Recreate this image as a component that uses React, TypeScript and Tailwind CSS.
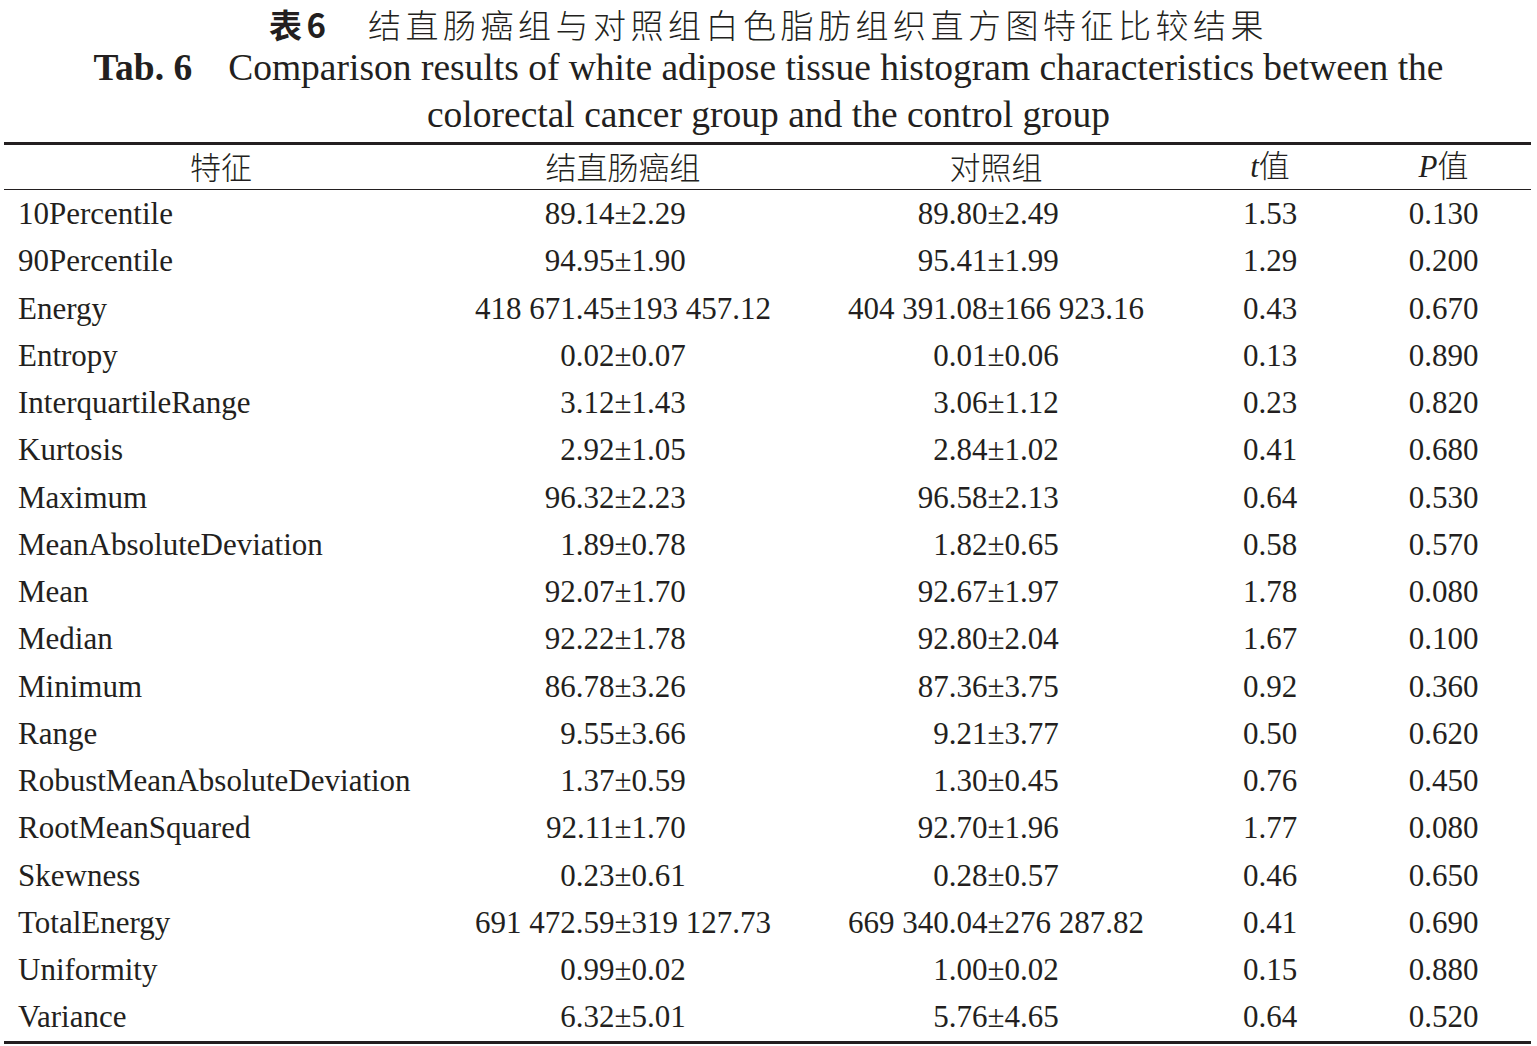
const serif = "font-['Liberation_Serif','Noto_Sans_CJK_SC',serif]";
const cjk = "font-['Noto_Sans_CJK_SC','Liberation_Sans',sans-serif]";

// [feature, cancer group, control group, t, P]
const rows: [string, string, string, string, string][] = [
  ['10Percentile', '89.14±2.29', '89.80±2.49', '1.53', '0.130'],
  ['90Percentile', '94.95±1.90', '95.41±1.99', '1.29', '0.200'],
  ['Energy', '418 671.45±193 457.12', '404 391.08±166 923.16', '0.43', '0.670'],
  ['Entropy', '0.02±0.07', '0.01±0.06', '0.13', '0.890'],
  ['InterquartileRange', '3.12±1.43', '3.06±1.12', '0.23', '0.820'],
  ['Kurtosis', '2.92±1.05', '2.84±1.02', '0.41', '0.680'],
  ['Maximum', '96.32±2.23', '96.58±2.13', '0.64', '0.530'],
  ['MeanAbsoluteDeviation', '1.89±0.78', '1.82±0.65', '0.58', '0.570'],
  ['Mean', '92.07±1.70', '92.67±1.97', '1.78', '0.080'],
  ['Median', '92.22±1.78', '92.80±2.04', '1.67', '0.100'],
  ['Minimum', '86.78±3.26', '87.36±3.75', '0.92', '0.360'],
  ['Range', '9.55±3.66', '9.21±3.77', '0.50', '0.620'],
  ['RobustMeanAbsoluteDeviation', '1.37±0.59', '1.30±0.45', '0.76', '0.450'],
  ['RootMeanSquared', '92.11±1.70', '92.70±1.96', '1.77', '0.080'],
  ['Skewness', '0.23±0.61', '0.28±0.57', '0.46', '0.650'],
  ['TotalEnergy', '691 472.59±319 127.73', '669 340.04±276 287.82', '0.41', '0.690'],
  ['Uniformity', '0.99±0.02', '1.00±0.02', '0.15', '0.880'],
  ['Variance', '6.32±5.01', '5.76±4.65', '0.64', '0.520'],
];

const cols = 'grid grid-cols-[434px_370px_376px_172px_175px]';

// mean±sd, lined up on the ± sign
const PlusMinus = ({ value }: { value: string }) => {
  const [mean, sd] = value.split('±');
  return (
    <div className="grid grid-cols-[1fr_auto_1fr]">
      <span className="text-right">{mean}</span>
      <span>±</span>
      <span className="text-left">{sd}</span>
    </div>
  );
};

export default function App() {
  return (
    <div className="w-[1537px] h-[1046px] bg-white text-[#231f20] overflow-hidden">
      {/* Chinese caption */}
      <div className={`${cjk} h-[44px] pt-[4px] text-center text-[33px] leading-[40px] tracking-[4.5px] font-light`}>
        <span className="font-bold">表6</span>
        <span>　结直肠癌组与对照组白色脂肪组织直方图特征比较结果</span>
      </div>

      {/* English caption */}
      <div className={`${serif} text-center text-[37.5px] leading-[47px]`}>
        <div>
          <span className="font-bold">Tab. 6</span>
          <span className="ml-[36px]">Comparison results of white adipose tissue histogram characteristics between the</span>
        </div>
        <div>colorectal cancer group and the control group</div>
      </div>

      {/* Table */}
      <div className={`${serif} mt-[4px] ml-[4px] w-[1527px] border-t-[3px] border-b-[3px] border-[#231f20] text-[31px]`}>
        <div className={`${cols} h-[45px] pb-[7px] items-center border-b-[1.5px] border-[#231f20] text-center leading-[38px]`}>
          <div className={`${cjk} font-light`}>特征</div>
          <div className={`${cjk} font-light`}>结直肠癌组</div>
          <div className={`${cjk} font-light`}>对照组</div>
          <div>
            <span className="italic font-['Liberation_Serif',serif]">t</span>
            <span className={`${cjk} font-light`}>值</span>
          </div>
          <div>
            <span className="italic font-['Liberation_Serif',serif]">P</span>
            <span className={`${cjk} font-light`}>值</span>
          </div>
        </div>

        {rows.map(([name, cancer, control, t, p]) => (
          <div key={name} className={`${cols} h-[47.25px] items-center leading-[47px]`}>
            <div className="pl-[14px]">{name}</div>
            <PlusMinus value={cancer} />
            <PlusMinus value={control} />
            <div className="text-center">{t}</div>
            <div className="text-center">{p}</div>
          </div>
        ))}
      </div>
    </div>
  );
}
